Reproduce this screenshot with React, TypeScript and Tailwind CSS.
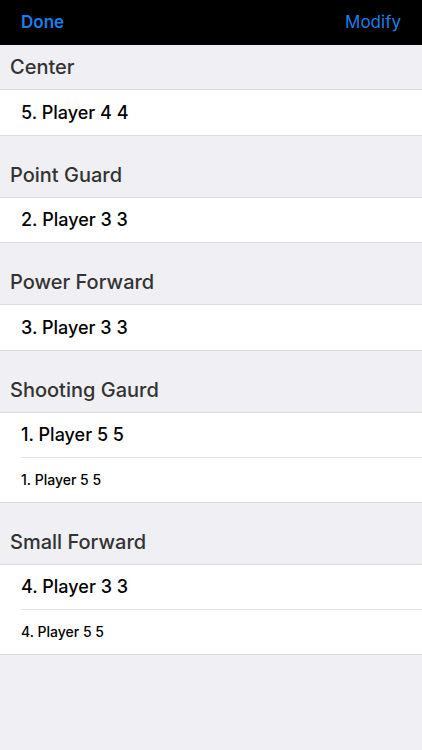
const sections = [
    { title: "Center", rows: [{ text: "5. Player 4 4", big: true }] },
    { title: "Point Guard", rows: [{ text: "2. Player 3 3", big: true }] },
    { title: "Power Forward", rows: [{ text: "3. Player 3 3", big: true }] },
    {
        title: "Shooting Gaurd",
        rows: [
            { text: "1. Player 5 5", big: true },
            { text: "1. Player 5 5", big: false },
        ],
    },
    {
        title: "Small Forward",
        rows: [
            { text: "4. Player 3 3", big: true },
            { text: "4. Player 5 5", big: false },
        ],
    },
];

export default function App() {
    return (
        <div
            className="min-h-[750px] w-[422px] bg-[#efeff4]"
            style={{ fontFamily: "Inter, 'Liberation Sans', sans-serif" }}
        >
            <div className="flex h-[45px] items-center justify-between bg-black px-[21px]">
                <span className="text-[17px] font-semibold text-[#1a7fe8]">
                    Done
                </span>
                <span className="text-[17px] text-[#1a7fe8]">
                    Modify
                </span>
            </div>

            {sections.map((section, i) => (
                <div key={section.title}>
                    <div
                        className={`flex items-end border-b border-[#dcdce0] px-[10px] pb-[12px] ${
                            i === 0 ? "h-[45px]" : "h-[62px]"
                        }`}
                    >
                        <span className="text-[20px] font-medium leading-none text-[#333]">
                            {section.title}
                        </span>
                    </div>
                    <div className="border-b border-[#dcdce0] bg-white">
                        {section.rows.map((row, j) => (
                            <div
                                key={j}
                                className={`ml-[21px] flex h-[44.5px] items-center ${
                                    j > 0 ? "border-t border-[#e3e3e6]" : ""
                                }`}
                            >
                                <span
                                    className={
                                        row.big
                                            ? "text-[18px] font-medium text-black"
                                            : "text-[14px] font-medium text-black"
                                    }
                                >
                                    {row.text}
                                </span>
                            </div>
                        ))}
                    </div>
                </div>
            ))}
        </div>
    );
}
